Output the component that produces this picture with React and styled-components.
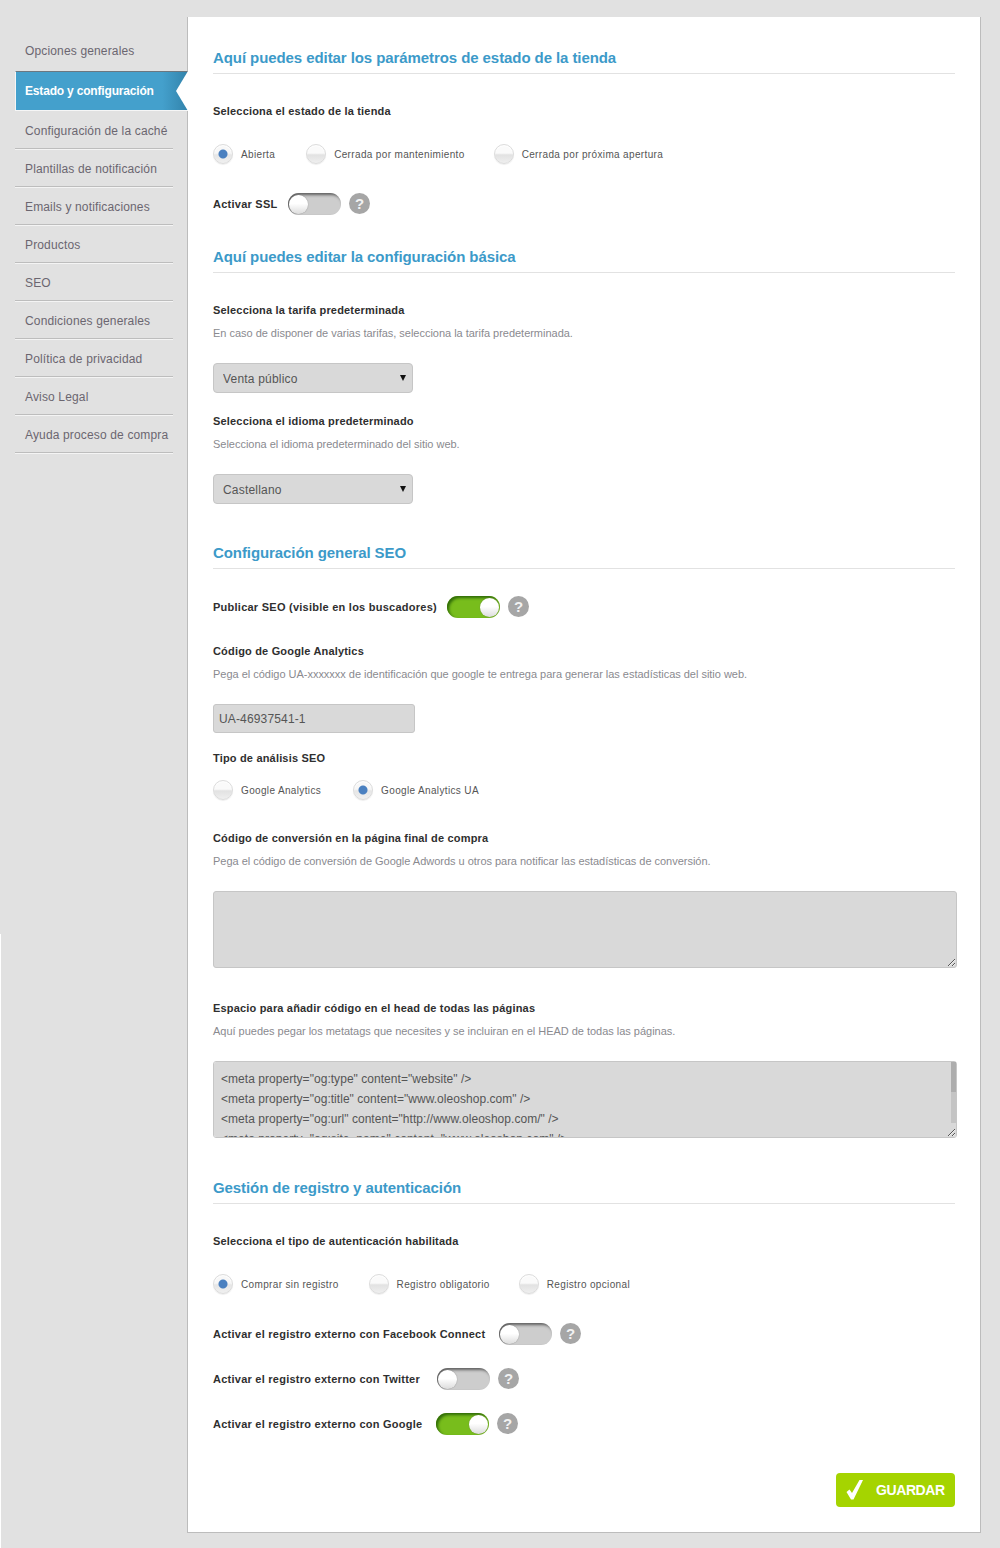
import React from 'react';
import styled, { createGlobalStyle } from 'styled-components';

const GlobalStyle = createGlobalStyle`
  html, body {
    margin: 0;
    padding: 0;
  }
  body {
    background: linear-gradient(#fff, #fff) 0 934px / 1px 100% no-repeat, #e1e1e1;
    font-family: "Liberation Sans", Arial, sans-serif;
  }
`;

const Page = styled.div`
  display: flex;
  align-items: flex-start;
  padding: 17px 0 15px 15px;
  width: 1000px;
  height: 1548px;
  box-sizing: border-box;
`;

const Sidebar = styled.nav`
  width: 172px;
  padding-top: 16px;
  flex-shrink: 0;
`;

const NavItem = styled.a`
  display: block;
  width: 158px;
  height: 38px;
  box-sizing: border-box;
  padding: 13px 0 0 10px;
  border-bottom: 1px solid #bdbdbd;
  box-shadow: 0 1px 0 #f4f4f4;
  font-size: 12px;
  line-height: 15px;
  letter-spacing: 0.15px;
  color: #6b6670;
`;

const PlainNavItem = styled(NavItem)`
  border-bottom: none;
  box-shadow: none;
  padding-top: 11px;
`;

const ActiveNavItem = styled.a`
  display: block;
  position: relative;
  width: 173px;
  height: 40px;
  box-sizing: border-box;
  padding: 12px 0 0 9px;
  background: linear-gradient(90deg, #44a0cc 85%, #3283ab 100%);
  border-top: 1px solid #6b7780;
  border-left: 1px solid #f6f6f6;
  border-bottom: 1px solid #f6f6f6;
  font-size: 12px;
  line-height: 15px;
  font-weight: bold;
  letter-spacing: -0.18px;
  color: #fff;

  &::after {
    content: '';
    position: absolute;
    top: -1px;
    right: 0;
    width: 12px;
    height: 40px;
    background: #fff;
    clip-path: polygon(100% 0, 0 50%, 100% 100%);
  }
`;

const Card = styled.main`
  width: 794px;
  box-sizing: border-box;
  padding: 31px 25px 25px 25px;
  background: #fff;
  border-left: 1px solid #bcbcbc;
  border-right: 1px solid #bcbcbc;
  border-bottom: 1px solid #bcbcbc;
`;

const Heading = styled.h2`
  margin: ${(p) => p.$top || 0}px 0 0;
  padding-bottom: 5px;
  border-bottom: 1px solid #e2e2e2;
  font-size: 15px;
  line-height: 20px;
  font-weight: bold;
  letter-spacing: -0.08px;
  color: #3c9ac9;
`;

const Label = styled.div`
  margin-top: ${(p) => p.$top || 0}px;
  font-size: 11px;
  line-height: 16px;
  font-weight: bold;
  letter-spacing: 0.18px;
  color: #2f2f2f;
`;

const Hint = styled.div`
  margin-top: 7px;
  font-size: 11px;
  line-height: 16px;
  letter-spacing: -0.02px;
  color: #8a8a8f;
`;

const RadioRow = styled.div`
  display: flex;
  align-items: center;
  height: 24px;
  margin-top: ${(p) => p.$top || 0}px;
`;

const RadioOption = styled.label`
  display: flex;
  align-items: center;
  margin-right: ${(p) => p.$gap}px;
  font-size: 10px;
  letter-spacing: 0.35px;
  color: #555;
`;

const RadioDot = styled.span`
  display: block;
  width: 20px;
  height: 20px;
  box-sizing: border-box;
  margin-right: 8px;
  border-radius: 50%;
  border: 1px solid #dcdcdc;
  background: ${(p) =>
    p.$on
      ? 'radial-gradient(circle, #4a80c0 0, #4a80c0 4px, transparent 5px), linear-gradient(#f7f7f7 45%, #e6e6e6 55%, #f0f0f0)'
      : 'linear-gradient(#fafafa 45%, #e2e2e2 55%, #efefef)'};
  box-shadow: inset 0 1px 1px #fff, 0 1px 1px #eee;
`;

const ToggleRow = styled.div`
  display: flex;
  align-items: center;
  height: 24px;
  margin-top: ${(p) => p.$top || 0}px;
`;

const ToggleLabel = styled(Label)`
  width: ${(p) => p.$w}px;
  margin: 0;
  letter-spacing: 0.25px;
  white-space: nowrap;
`;

const Toggle = styled.span`
  display: flex;
  justify-content: ${(p) => (p.$on ? 'flex-end' : 'flex-start')};
  align-items: center;
  width: 53px;
  height: 22px;
  box-sizing: border-box;
  padding: 0 1px;
  margin-right: 8px;
  border-radius: 11px;
  background: ${(p) => (p.$on ? '#78bd1c' : '#cdcdcd')};
  box-shadow: inset 2px 2px 3px ${(p) => (p.$on ? '#2f6a08' : '#5f5f5f')};
`;

const ToggleKnob = styled.span`
  display: block;
  width: 19px;
  height: 19px;
  border-radius: 50%;
  background: linear-gradient(#fff 45%, #dcdcdc);
  box-shadow: 0 0 1px #666;
`;

const HelpBadge = styled.span`
  display: block;
  width: 21px;
  height: 21px;
  margin-bottom: 2px;
  border-radius: 50%;
  background: #a6a6a6;
  color: #f2f2f2;
  font-size: 15px;
  line-height: 21px;
  font-weight: bold;
  text-align: center;
`;

const SelectWrap = styled.div`
  position: relative;
  width: 200px;
  margin-top: 22px;

  &::after {
    content: '';
    position: absolute;
    top: 12px;
    right: 7px;
    border-left: 3px solid transparent;
    border-right: 3px solid transparent;
    border-top: 6px solid #111;
  }
`;

const Select = styled.select`
  display: block;
  width: 200px;
  height: 30px;
  padding: 2px 9px 0;
  appearance: none;
  border: 1px solid #c6c6c6;
  border-radius: 4px;
  background: #d9d9d9;
  font-family: inherit;
  font-size: 12px;
  letter-spacing: 0.2px;
  color: #555;
`;

const TextInput = styled.input`
  display: block;
  width: 202px;
  height: 29px;
  box-sizing: border-box;
  margin-top: 22px;
  padding: 0 5px;
  border: 1px solid #c6c6c6;
  border-radius: 3px;
  background: #d9d9d9;
  font-family: inherit;
  font-size: 12px;
  letter-spacing: 0.15px;
  color: #555;
`;

const AreaWrap = styled.div`
  position: relative;
  width: 744px;
  margin-top: 22px;
`;

const TextArea = styled.textarea`
  display: block;
  width: 744px;
  height: 77px;
  box-sizing: border-box;
  padding: 7px;
  border: 1px solid #c6c6c6;
  border-radius: 3px;
  background: #d9d9d9;
  font-family: inherit;
  font-size: 12px;
  line-height: 20px;
  letter-spacing: 0.04px;
  color: #555;
  resize: vertical;
`;

/* headless chromium hides real scrollbars, so this one sits over the textarea */
const ScrollTrack = styled.div`
  position: absolute;
  top: 1px;
  right: 1px;
  bottom: 15px;
  width: 5px;
  background: #c4c4c4;

  &::before {
    content: '';
    display: block;
    height: 30px;
    background: #adadad;
  }
`;

const Actions = styled.div`
  display: flex;
  justify-content: flex-end;
  margin-top: 37px;
`;

const SaveButton = styled.button`
  display: flex;
  align-items: center;
  width: 119px;
  height: 34px;
  padding: 0 0 0 10px;
  border: none;
  border-radius: 4px;
  background: #a5d400;
  color: #fff;
  font-family: inherit;
  font-size: 14px;
  font-weight: bold;
  letter-spacing: -0.4px;

  svg {
    margin-right: 12px;
  }
`;

const navBefore = ['Opciones generales'];
const navAfter = [
  'Configuración de la caché',
  'Plantillas de notificación',
  'Emails y notificaciones',
  'Productos',
  'SEO',
  'Condiciones generales',
  'Política de privacidad',
  'Aviso Legal',
  'Ayuda proceso de compra',
];

const metaTags = `<meta property="og:type" content="website" />
<meta property="og:title" content="www.oleoshop.com" />
<meta property="og:url" content="http://www.oleoshop.com/" />
<meta property="og:site_name" content="www.oleoshop.com" />
<meta property="og:description" content="" />
<meta property="og:locale" content="es_ES" />
<meta name="robots" content="index, follow" />
<meta name="author" content="www.oleoshop.com" />`;

function SwitchRow({ label, on, top, width }) {
  return (
    <ToggleRow $top={top}>
      <ToggleLabel $w={width}>{label}</ToggleLabel>
      <Toggle $on={on}><ToggleKnob /></Toggle>
      <HelpBadge>?</HelpBadge>
    </ToggleRow>
  );
}

function Radios({ top, options }) {
  return (
    <RadioRow $top={top}>
      {options.map((o) => (
        <RadioOption key={o.text} $gap={o.gap}>
          <RadioDot $on={o.on} />
          {o.text}
        </RadioOption>
      ))}
    </RadioRow>
  );
}

export default function App() {
  return (
    <Page>
      <GlobalStyle />
      <Sidebar>
        {navBefore.map((n) => <PlainNavItem key={n}>{n}</PlainNavItem>)}
        <ActiveNavItem>Estado y configuración</ActiveNavItem>
        {navAfter.map((n) => <NavItem key={n}>{n}</NavItem>)}
      </Sidebar>
      <Card>
        <Heading>Aquí puedes editar los parámetros de estado de la tienda</Heading>
        <Label $top={29}>Selecciona el estado de la tienda</Label>
        <Radios
          top={23}
          options={[
            { text: 'Abierta', on: true, gap: 31 },
            { text: 'Cerrada por mantenimiento', gap: 29 },
            { text: 'Cerrada por próxima apertura', gap: 0 },
          ]}
        />
        <SwitchRow label="Activar SSL" width={75} top={26} />

        <Heading $top={31}>Aquí puedes editar la configuración básica</Heading>
        <Label $top={29}>Selecciona la tarifa predeterminada</Label>
        <Hint>En caso de disponer de varias tarifas, selecciona la tarifa predeterminada.</Hint>
        <SelectWrap>
          <Select defaultValue="Venta público"><option>Venta público</option></Select>
        </SelectWrap>
        <Label $top={20}>Selecciona el idioma predeterminado</Label>
        <Hint>Selecciona el idioma predeterminado del sitio web.</Hint>
        <SelectWrap>
          <Select defaultValue="Castellano"><option>Castellano</option></Select>
        </SelectWrap>

        <Heading $top={39}>Configuración general SEO</Heading>
        <SwitchRow label="Publicar SEO (visible en los buscadores)" width={234} on top={26} />
        <Label $top={24}>Código de Google Analytics</Label>
        <Hint>Pega el código UA-xxxxxxx de identificación que google te entrega para generar las estadísticas del sitio web.</Hint>
        <TextInput readOnly value="UA-46937541-1" />
        <Label $top={17}>Tipo de análisis SEO</Label>
        <Radios
          top={12}
          options={[
            { text: 'Google Analytics', gap: 32 },
            { text: 'Google Analytics UA', on: true, gap: 0 },
          ]}
        />
        <Label $top={28}>Código de conversión en la página final de compra</Label>
        <Hint>Pega el código de conversión de Google Adwords u otros para notificar las estadísticas de conversión.</Hint>
        <AreaWrap>
          <TextArea readOnly value="" />
        </AreaWrap>
        <Label $top={32}>Espacio para añadir código en el head de todas las páginas</Label>
        <Hint>Aquí puedes pegar los metatags que necesites y se incluiran en el HEAD de todas las páginas.</Hint>
        <AreaWrap>
          <TextArea readOnly value={metaTags} />
          <ScrollTrack />
        </AreaWrap>

        <Heading $top={40}>Gestión de registro y autenticación</Heading>
        <Label $top={29}>Selecciona el tipo de autenticación habilitada</Label>
        <Radios
          top={23}
          options={[
            { text: 'Comprar sin registro', on: true, gap: 30 },
            { text: 'Registro obligatorio', gap: 29 },
            { text: 'Registro opcional', gap: 0 },
          ]}
        />
        <SwitchRow label="Activar el registro externo con Facebook Connect" width={286} top={26} />
        <SwitchRow label="Activar el registro externo con Twitter" width={224} top={21} />
        <SwitchRow label="Activar el registro externo con Google" width={223} on top={21} />

        <Actions>
          <SaveButton>
            <svg width="18" height="20" viewBox="0 0 18 20">
              <path d="M0.5 12 L3.5 9.5 L6 13 L13.5 0 L17 0 L7.5 19.5 L5 19.5 Z" fill="#fff" />
            </svg>
            GUARDAR
          </SaveButton>
        </Actions>
      </Card>
    </Page>
  );
}
